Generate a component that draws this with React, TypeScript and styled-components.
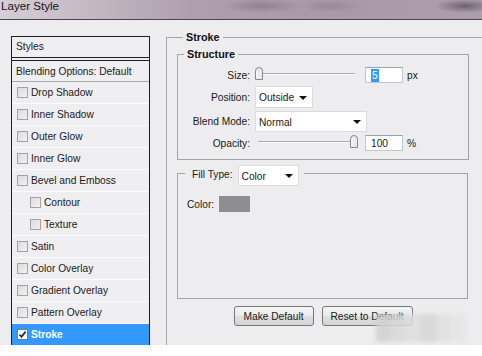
import React from 'react';
import styled, { createGlobalStyle } from 'styled-components';

const GlobalStyle = createGlobalStyle`
  html, body { margin: 0; padding: 0; background: #ffffff; }
  body { font-family: "Liberation Sans", Arial, sans-serif; }
  * { box-sizing: border-box; }
`;

const Dialog = styled.div`
  position: relative;
  width: 482px;
  height: 345px;
  overflow: hidden;
  background: #edecee;
  display: flex;
  flex-direction: column;
  font-size: 10.2px;
  color: #1a1a1a;
`;

const TitleBar = styled.div`
  flex: none;
  height: 20px;
  border-bottom: 1px solid #4e424e;
  background:
    radial-gradient(ellipse 40px 7px at 262px 6px, rgba(110, 95, 110, 0.45), transparent),
    radial-gradient(ellipse 30px 6px at 330px 6px, rgba(120, 105, 120, 0.35), transparent),
    radial-gradient(ellipse 30px 7px at 465px 6px, rgba(60, 50, 60, 0.55), transparent),
    linear-gradient(to right, #d6cfd7 0%, #c4b9c5 18%, #ae9fae 40%, #a898a8 70%, #ad9ead 100%);
  display: flex;
  align-items: flex-start;
`;

const Title = styled.span`
  font-size: 11.6px;
  line-height: 12px;
  padding-left: 1px;
  color: #141214;
`;

const Body = styled.div`
  flex: 1;
  min-height: 0;
  display: flex;
  align-items: flex-start;
  padding-left: 11px;
`;

const StylesPanel = styled.div`
  flex: none;
  width: 139px;
  height: 400px;
  margin-top: 16px;
  border: 1px solid #1e1e1e;
  background: #efeef0;
  display: flex;
  flex-direction: column;
`;

const PanelHeader = styled.div`
  height: 24px;
  line-height: 20px;
  padding-left: 4px;
  border-bottom: 4px double #1e1e1e;
`;

const Row = styled.div<{ $indent?: boolean; $selected?: boolean; $strong?: boolean }>`
  height: ${(p) => (p.$strong ? '21px' : '22px')};
  flex: none;
  display: flex;
  align-items: center;
  gap: 3px;
  padding-left: ${(p) => (p.$strong ? '4px' : p.$indent ? '18px' : '5px')};
  border-bottom: 1px solid ${(p) => (p.$strong ? '#a9a8aa' : '#fbfbfb')};
  background: ${(p) => (p.$selected ? '#3399ff' : 'transparent')};
  color: ${(p) => (p.$selected ? '#ffffff' : '#1a1a1a')};
  font-weight: ${(p) => (p.$selected ? 'bold' : 'normal')};
`;

const Check = styled.span<{ $checked?: boolean }>`
  flex: none;
  width: 11px;
  height: 11px;
  border: 1px solid ${(p) => (p.$checked ? '#6d7a8c' : '#a3a3a3')};
  background: ${(p) =>
    p.$checked ? '#ffffff' : 'linear-gradient(135deg, #dcdcdc 0%, #f2f2f2 100%)'};
  display: flex;
  align-items: center;
  justify-content: center;
`;

const RightArea = styled.div`
  flex: 1;
  min-width: 0;
  margin-left: 16px;
  margin-top: 11px;
`;

const StrokeSet = styled.fieldset`
  margin: 0;
  min-width: 0;
  width: 340px;
  height: 340px;
  padding: 0 0 0 10px;
  border: 1px solid #a4a3a5;
`;

const BoldLegend = styled.legend`
  margin-left: 6px;
  padding: 0 3px;
  font-weight: bold;
  font-size: 10.8px;
  line-height: 13px;
  color: #111;
`;

const StructureSet = styled.fieldset`
  margin: 4px 0 0 0;
  min-width: 0;
  width: 292px;
  height: 112px;
  padding: 0;
  border: 1px solid #a4a3a5;
`;

const ControlGrid = styled.div`
  display: grid;
  grid-template-columns: 72px 1fr;
  grid-template-rows: 16px 22px 21px 16px;
  column-gap: 5px;
  row-gap: 3px;
  padding-top: 6px;
  align-items: center;
`;

const Label = styled.span`
  text-align: right;
  white-space: nowrap;
`;

const SliderLine = styled.div`
  display: flex;
  align-items: center;
  height: 16px;
`;

const NumBox = styled.div`
  width: 38px;
  height: 16px;
  margin-left: 6px;
  border: 1px solid #c3c9d2;
  border-top-color: #9da3ad;
  background: #ffffff;
  display: flex;
  align-items: center;
  padding-left: 5px;
`;

const Highlight = styled.span`
  background: #3399ff;
  color: #ffffff;
  padding: 1px 1px;
`;

const Unit = styled.span`
  margin-left: 4px;
`;

const SelectBox = styled.div<{ $w: number; $h?: number }>`
  width: ${(p) => p.$w}px;
  height: ${(p) => p.$h ?? 22}px;
  background: #ffffff;
  border: 1px solid #dcdcdc;
  display: flex;
  align-items: center;
  justify-content: space-between;
  padding: 1px 5px 0 3px;
`;

const Arrow = styled.span`
  flex: none;
  width: 0;
  height: 0;
  border-left: 4px solid transparent;
  border-right: 4px solid transparent;
  border-top: 4px solid #111;
`;

const FillSet = styled.fieldset`
  margin: 5px 0 0 0;
  min-width: 0;
  width: 291px;
  height: 134px;
  padding: 0;
  border: 1px solid #a4a3a5;
`;

const FillLegend = styled.legend`
  margin-left: 7px;
  padding: 0 5px 0 7px;
  height: 16px;
  display: flex;
  align-items: flex-start;
  gap: 5px;
`;

const FillLabel = styled.span`
  line-height: 19px;
`;

const ColorRow = styled.div`
  display: flex;
  align-items: center;
  gap: 5px;
  margin-top: 15px;
  padding-left: 9px;
`;

const Swatch = styled.span`
  width: 31px;
  height: 16px;
  background: #8e8d8f;
`;

const ButtonRow = styled.div`
  width: 292px;
  margin-top: 7px;
  display: flex;
  justify-content: center;
  gap: 8px;
`;

const Button = styled.button<{ $w: number }>`
  width: ${(p) => p.$w}px;
  height: 20px;
  padding: 0;
  border: 1px solid #767676;
  border-radius: 3px;
  background: linear-gradient(#f4f4f4 0%, #ececec 48%, #dedede 52%, #d4d4d4 100%);
  font-family: "Liberation Sans", Arial, sans-serif;
  font-size: 10.2px;
  color: #1a1a1a;
`;

const Watermark = styled.div`
  position: absolute;
  left: 376px;
  top: 314px;
  display: flex;
  filter: blur(2px);
  opacity: 0.85;
`;

const Pixel = styled.span<{ $c: string }>`
  width: 15px;
  height: 28px;
  background: ${(p) => p.$c};
`;

function Slider({ pos }: { pos: number }) {
  return (
    <svg width="104" height="16" viewBox="0 0 104 16">
      <line x1="3" y1="6.5" x2="100" y2="6.5" stroke="#a9a9a9" strokeWidth="1" />
      <line x1="3" y1="7.5" x2="100" y2="7.5" stroke="#fdfdfd" strokeWidth="1" />
      <path
        d={`M${pos + 0.5},12.5 V4 A3.5,3.5 0 0 1 ${pos + 7.5},4 V12.5 Z`}
        fill="#ebebeb"
        stroke="#8a8a8a"
        strokeWidth="1"
      />
      <line x1={pos + 2} y1="4" x2={pos + 2} y2="11" stroke="#ffffff" strokeWidth="1" />
    </svg>
  );
}

function CheckMark() {
  return (
    <svg width="9" height="9" viewBox="0 0 9 9">
      <path d="M1.5 4.5 L3.5 6.8 L7.6 1.6" fill="none" stroke="#23304a" strokeWidth="1.8" />
    </svg>
  );
}

type Item = { label: string; indent?: boolean; selected?: boolean };

const items: Item[] = [
  { label: 'Drop Shadow' },
  { label: 'Inner Shadow' },
  { label: 'Outer Glow' },
  { label: 'Inner Glow' },
  { label: 'Bevel and Emboss' },
  { label: 'Contour', indent: true },
  { label: 'Texture', indent: true },
  { label: 'Satin' },
  { label: 'Color Overlay' },
  { label: 'Gradient Overlay' },
  { label: 'Pattern Overlay' },
  { label: 'Stroke', selected: true },
];

export default function App() {
  return (
    <>
      <GlobalStyle />
      <Dialog>
        <TitleBar>
          <Title>Layer Style</Title>
        </TitleBar>
        <Body>
          <StylesPanel>
            <PanelHeader>Styles</PanelHeader>
            <Row $strong>Blending Options: Default</Row>
            {items.map((it) => (
              <Row key={it.label} $indent={it.indent} $selected={it.selected}>
                <Check $checked={it.selected}>{it.selected && <CheckMark />}</Check>
                <span>{it.label}</span>
              </Row>
            ))}
          </StylesPanel>
          <RightArea>
            <StrokeSet>
              <BoldLegend>Stroke</BoldLegend>
              <StructureSet>
                <BoldLegend>Structure</BoldLegend>
                <ControlGrid>
                  <Label>Size:</Label>
                  <SliderLine>
                    <Slider pos={0} />
                    <NumBox>
                      <Highlight>5</Highlight>
                    </NumBox>
                    <Unit>px</Unit>
                  </SliderLine>
                  <Label>Position:</Label>
                  <SelectBox $w={58}>
                    <span>Outside</span>
                    <Arrow />
                  </SelectBox>
                  <Label>Blend Mode:</Label>
                  <SelectBox $w={112} $h={21}>
                    <span>Normal</span>
                    <Arrow />
                  </SelectBox>
                  <Label>Opacity:</Label>
                  <SliderLine>
                    <Slider pos={95} />
                    <NumBox>100</NumBox>
                    <Unit>%</Unit>
                  </SliderLine>
                </ControlGrid>
              </StructureSet>
              <FillSet>
                <FillLegend>
                  <FillLabel>Fill Type:</FillLabel>
                  <SelectBox $w={61} $h={21}>
                    <span>Color</span>
                    <Arrow />
                  </SelectBox>
                </FillLegend>
                <ColorRow>
                  <span>Color:</span>
                  <Swatch />
                </ColorRow>
              </FillSet>
              <ButtonRow>
                <Button $w={80}>Make Default</Button>
                <Button $w={91}>Reset to Default</Button>
              </ButtonRow>
            </StrokeSet>
          </RightArea>
        </Body>
        <Watermark>
          <Pixel $c="#d2d2d2" />
          <Pixel $c="#d9d9d9" />
          <Pixel $c="#dedede" />
          <Pixel $c="#d6d6d6" />
          <Pixel $c="#e0e0e0" />
          <Pixel $c="#e6e6e6" />
        </Watermark>
      </Dialog>
    </>
  );
}
